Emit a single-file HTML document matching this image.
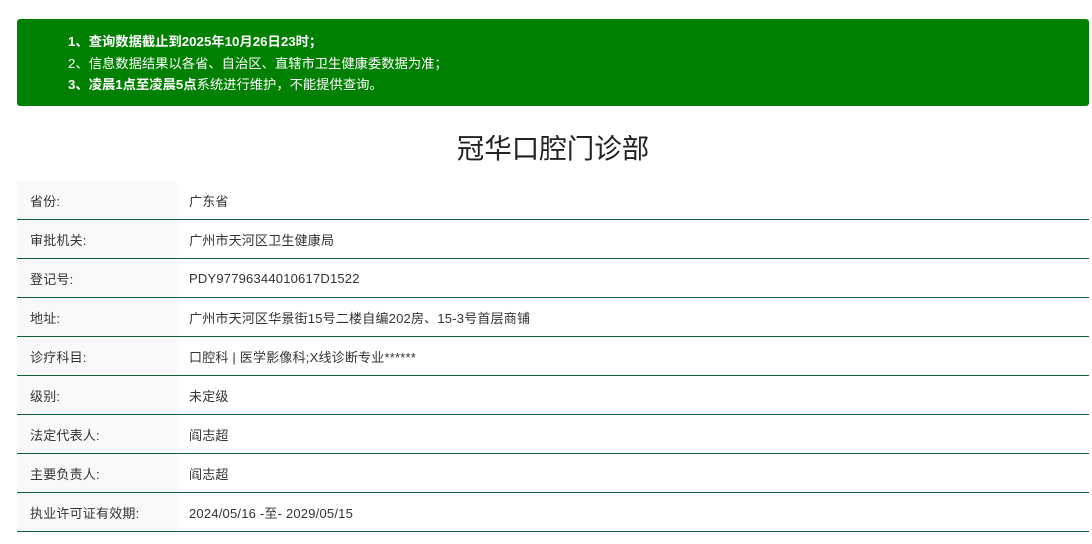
<!DOCTYPE html>
<html><head><meta charset="utf-8"><style>
body{margin:0;background:#fff;font-family:"Liberation Sans","Noto Sans CJK SC",sans-serif;color:#333;width:1092px;height:544px;overflow:hidden}
.ban{position:absolute;left:17px;top:19px;width:1072px;height:87px;background:#008000;border-radius:3px;color:#fff;font-size:13.3px;box-sizing:border-box;padding:12px 0 0 51px;line-height:21.5px}
.ban b{font-weight:bold}
h1{position:absolute;left:0;width:1106px;top:130px;margin:0;text-align:center;font-size:27.5px;font-weight:normal;color:#222;line-height:38px}
table{position:absolute;left:17px;top:181px;width:1072px;border-collapse:collapse;font-size:13px;letter-spacing:0.2px}
td{height:38px;border-bottom:1px solid #0e5e36;padding:0;vertical-align:middle}
td.l{width:160px;background:#f9f9f9;padding-left:13px;box-sizing:border-box}
td.v{padding-left:12px}
</style></head><body>
<div class="ban">
<div><b>1、查询数据截止到2025年10月26日23时；</b></div>
<div>2、信息数据结果以各省、自治区、直辖市卫生健康委数据为准；</div>
<div><b>3、凌晨1点至凌晨5点</b>系统进行维护，不能提供查询。</div>
</div>
<h1>冠华口腔门诊部</h1>
<table>
<tr><td class="l">省份:</td><td class="v">广东省</td></tr>
<tr><td class="l">审批机关:</td><td class="v">广州市天河区卫生健康局</td></tr>
<tr><td class="l">登记号:</td><td class="v">PDY97796344010617D1522</td></tr>
<tr><td class="l">地址:</td><td class="v">广州市天河区华景街15号二楼自编202房、15-3号首层商铺</td></tr>
<tr><td class="l">诊疗科目:</td><td class="v">口腔科 | 医学影像科;X线诊断专业******</td></tr>
<tr><td class="l">级别:</td><td class="v">未定级</td></tr>
<tr><td class="l">法定代表人:</td><td class="v">阎志超</td></tr>
<tr><td class="l">主要负责人:</td><td class="v">阎志超</td></tr>
<tr><td class="l">执业许可证有效期:</td><td class="v">2024/05/16 -至- 2029/05/15</td></tr>
</table>
</body></html>
